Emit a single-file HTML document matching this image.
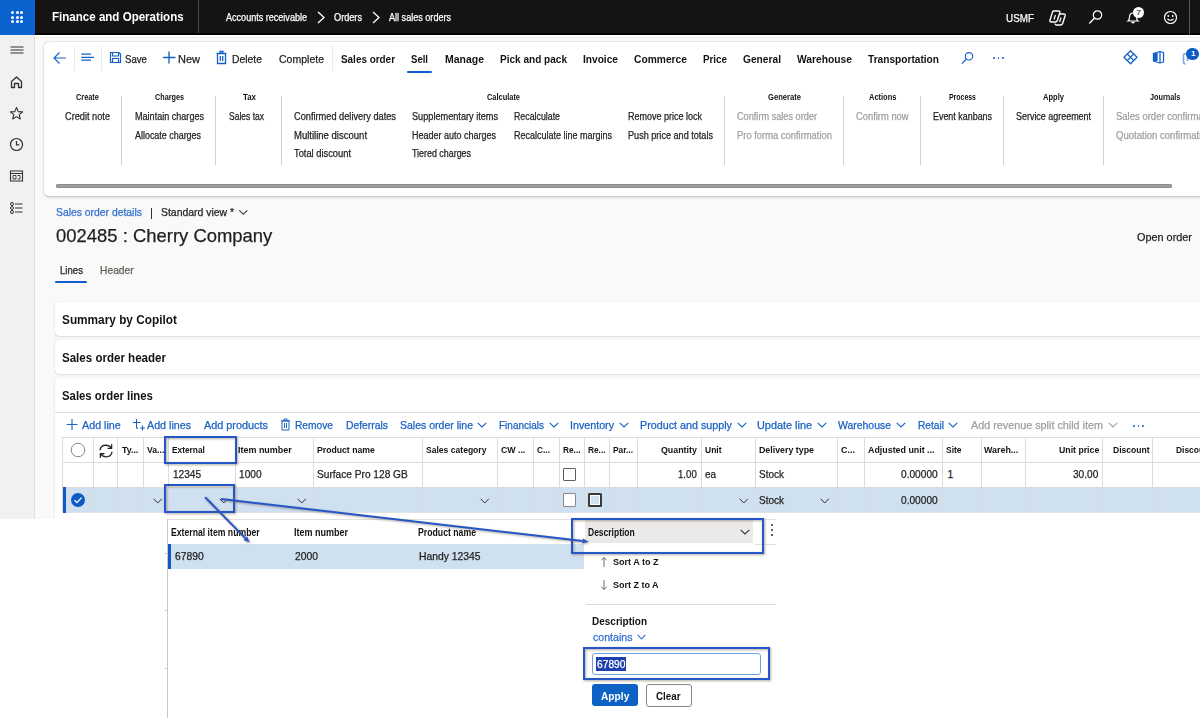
<!DOCTYPE html><html><head><meta charset="utf-8"><style>
html,body{margin:0;padding:0;width:1200px;height:718px;overflow:hidden;background:#fff}
body{position:relative;font-family:"Liberation Sans",sans-serif}
.t{position:absolute;white-space:nowrap;transform-origin:0 50%;}
.t.r{-webkit-text-stroke:0.25px currentColor}
svg{overflow:visible}
</style></head><body>
<div style="position:absolute;left:0px;top:0px;width:1200px;height:718px;background:#fff"></div>
<div style="position:absolute;left:0px;top:35px;width:35px;height:485px;background:#f2f1f0"></div>
<div style="position:absolute;left:35px;top:35px;width:1165px;height:485px;background:#faf9f8"></div>
<div style="position:absolute;left:34px;top:35px;width:1px;height:485px;background:#e1dfdd"></div>
<div style="position:absolute;left:35px;top:35px;width:1165px;height:2px;background:#fff"></div>
<div style="position:absolute;left:35px;top:37px;width:1165px;height:1px;background:#efeeed"></div>
<div style="position:absolute;left:0px;top:0px;width:1200px;height:35px;background:#151412"></div>
<div style="position:absolute;left:0px;top:33px;width:1200px;height:2px;background:#050505"></div>
<div style="position:absolute;left:0px;top:0px;width:35px;height:35px;background:#0b63cf"></div>
<div style="position:absolute;left:11.0px;top:11.0px;width:3px;height:3px;background:#fff;border-radius:50%"></div>
<div style="position:absolute;left:11.0px;top:15.5px;width:3px;height:3px;background:#fff;border-radius:50%"></div>
<div style="position:absolute;left:11.0px;top:20.0px;width:3px;height:3px;background:#fff;border-radius:50%"></div>
<div style="position:absolute;left:15.5px;top:11.0px;width:3px;height:3px;background:#fff;border-radius:50%"></div>
<div style="position:absolute;left:15.5px;top:15.5px;width:3px;height:3px;background:#fff;border-radius:50%"></div>
<div style="position:absolute;left:15.5px;top:20.0px;width:3px;height:3px;background:#fff;border-radius:50%"></div>
<div style="position:absolute;left:20.0px;top:11.0px;width:3px;height:3px;background:#fff;border-radius:50%"></div>
<div style="position:absolute;left:20.0px;top:15.5px;width:3px;height:3px;background:#fff;border-radius:50%"></div>
<div style="position:absolute;left:20.0px;top:20.0px;width:3px;height:3px;background:#fff;border-radius:50%"></div>
<div class="t b" style="left:51.70px;top:10.45px;font-size:13px;line-height:13px;font-weight:700;color:#fff;transform:scaleX(0.889);">Finance and Operations</div>
<div style="position:absolute;left:198px;top:0px;width:1px;height:33px;background:#4a4846"></div>
<div class="t r" style="left:226.00px;top:11.65px;font-size:11px;line-height:11px;font-weight:400;color:#fff;transform:scaleX(0.823);">Accounts receivable</div>
<div class="t r" style="left:334.00px;top:11.65px;font-size:11px;line-height:11px;font-weight:400;color:#fff;transform:scaleX(0.833);">Orders</div>
<div class="t r" style="left:389.00px;top:11.65px;font-size:11px;line-height:11px;font-weight:400;color:#fff;transform:scaleX(0.825);">All sales orders</div>
<svg style="position:absolute;left:316px;top:11px" width="10" height="13"><path d="M2 1 L8 6.5 L2 12" stroke="#fff" stroke-width="1.3" fill="none"/></svg>
<svg style="position:absolute;left:371px;top:11px" width="10" height="13"><path d="M2 1 L8 6.5 L2 12" stroke="#fff" stroke-width="1.3" fill="none"/></svg>
<div class="t r" style="left:1006.00px;top:12.65px;font-size:11px;line-height:11px;font-weight:400;color:#fff;transform:scaleX(0.899);">USMF</div>
<div style="position:absolute;left:1189px;top:0px;width:1px;height:35px;background:#555"></div>
<div style="position:absolute;left:43.5px;top:42px;width:1170px;height:153.5px;background:#fff;border-radius:5px;box-shadow:0 0 1.5px rgba(0,0,0,.28),0 1.5px 2.5px rgba(0,0,0,.12)"></div>
<svg style="position:absolute;left:52px;top:50px;" width="16" height="16" viewBox="0 0 16 16"><path d="M2.5 8 H14 M7.5 2.5 L2 8 L7.5 13.5" stroke="#1460c8" stroke-width="1.15" fill="none"/></svg>
<div style="position:absolute;left:74px;top:46px;width:1px;height:25px;background:#edebe9"></div>
<svg style="position:absolute;left:80px;top:51px;" width="16" height="12" viewBox="0 0 16 12"><path d="M1.3 3 H11 M1.3 6.3 H14 M1.3 9.2 H11" stroke="#1460c8" stroke-width="1.25" fill="none"/></svg>
<div style="position:absolute;left:101px;top:46px;width:1px;height:25px;background:#edebe9"></div>
<svg style="position:absolute;left:109px;top:51px;" width="13" height="13" viewBox="0 0 13 13"><path d="M1.5 1.5 H10 L11.5 3 V11.5 H1.5 Z M3.5 1.5 V5 H9.5 V1.5 M3.5 11.5 V7.5 H9.5 V11.5" stroke="#1460c8" stroke-width="1.2" fill="none"/></svg>
<div class="t r" style="left:124.80px;top:53.65px;font-size:11px;line-height:11px;font-weight:400;color:#201f1e;transform:scaleX(0.874);">Save</div>
<svg style="position:absolute;left:162px;top:50px;" width="15" height="15" viewBox="0 0 15 15"><path d="M7 1.5 V13.5 M1 7.5 H13.5" stroke="#1460c8" stroke-width="1.35" fill="none"/></svg>
<div class="t r" style="left:178.00px;top:53.65px;font-size:11px;line-height:11px;font-weight:400;color:#201f1e;transform:scaleX(0.999);">New</div>
<svg style="position:absolute;left:215px;top:50px;" width="13" height="15" viewBox="0 0 13 15"><path d="M2.5 3.5 H10.5 V13.5 H2.5 Z M1.5 3.3 H11.5 M5 3 V1.5 H8 V3 M5.3 6 V11 M7.7 6 V11" stroke="#1460c8" stroke-width="1.3" fill="none"/></svg>
<div class="t r" style="left:232.00px;top:53.65px;font-size:11px;line-height:11px;font-weight:400;color:#201f1e;transform:scaleX(0.943);">Delete</div>
<div class="t r" style="left:279.00px;top:53.65px;font-size:11px;line-height:11px;font-weight:400;color:#201f1e;transform:scaleX(0.956);">Complete</div>
<div style="position:absolute;left:332px;top:46px;width:1px;height:25px;background:#edebe9"></div>
<div class="t b" style="left:341.00px;top:53.65px;font-size:11px;line-height:11px;font-weight:700;color:#141312;transform:scaleX(0.901);">Sales order</div>
<div class="t b" style="left:411.00px;top:53.65px;font-size:11px;line-height:11px;font-weight:700;color:#141312;transform:scaleX(0.869);">Sell</div>
<div class="t b" style="left:445.00px;top:53.65px;font-size:11px;line-height:11px;font-weight:700;color:#141312;transform:scaleX(0.952);">Manage</div>
<div class="t b" style="left:500.00px;top:53.65px;font-size:11px;line-height:11px;font-weight:700;color:#141312;transform:scaleX(0.913);">Pick and pack</div>
<div class="t b" style="left:583.00px;top:53.65px;font-size:11px;line-height:11px;font-weight:700;color:#141312;transform:scaleX(0.923);">Invoice</div>
<div class="t b" style="left:634.00px;top:53.65px;font-size:11px;line-height:11px;font-weight:700;color:#141312;transform:scaleX(0.932);">Commerce</div>
<div class="t b" style="left:703.00px;top:53.65px;font-size:11px;line-height:11px;font-weight:700;color:#141312;transform:scaleX(0.892);">Price</div>
<div class="t b" style="left:743.00px;top:53.65px;font-size:11px;line-height:11px;font-weight:700;color:#141312;transform:scaleX(0.928);">General</div>
<div class="t b" style="left:797.00px;top:53.65px;font-size:11px;line-height:11px;font-weight:700;color:#141312;transform:scaleX(0.934);">Warehouse</div>
<div class="t b" style="left:868.00px;top:53.65px;font-size:11px;line-height:11px;font-weight:700;color:#141312;transform:scaleX(0.922);">Transportation</div>
<div style="position:absolute;left:407px;top:70.5px;width:25px;height:2.5px;background:#0f5fcc;border-radius:1px"></div>
<svg style="position:absolute;left:959px;top:50px;" width="16" height="16" viewBox="0 0 16 16"><circle cx="10" cy="6.3" r="3.7" stroke="#1460c8" stroke-width="1.1" fill="none"/><path d="M7.4 9 L3 13.6" stroke="#1460c8" stroke-width="1.2"/></svg>
<div style="position:absolute;left:993.0px;top:57px;width:1.8px;height:1.8px;background:#1460c8;border-radius:50%"></div>
<div style="position:absolute;left:997.5px;top:57px;width:1.8px;height:1.8px;background:#1460c8;border-radius:50%"></div>
<div style="position:absolute;left:1002.0px;top:57px;width:1.8px;height:1.8px;background:#1460c8;border-radius:50%"></div>
<svg style="position:absolute;left:1122px;top:49px;" width="17" height="17" viewBox="0 0 17 17"><path d="M8.5 1.8 L15 8.3 L8.5 14.8 L2 8.3 Z" stroke="#1460c8" stroke-width="1.3" fill="none" stroke-linejoin="round"/><path d="M5.3 5 L11.7 11.5 M11.7 5 L5.3 11.5" stroke="#1460c8" stroke-width="1.1" fill="none"/></svg>
<svg style="position:absolute;left:1152px;top:50px;" width="13" height="14" viewBox="0 0 13 14"><path d="M1.5 3.5 L8 1.5 L11.5 2.5 V12 L8 13 L1.5 11 Z" stroke="#1460c8" stroke-width="1.3" fill="none" stroke-linejoin="round"/><path d="M2 4 L5 3.2 V10.2 L2 11 Z M8 1.8 V12.8" stroke="#1460c8" stroke-width="1.3" fill="#1460c8"/></svg>
<svg style="position:absolute;left:1181px;top:51px;" width="12" height="15" viewBox="0 0 12 15"><path d="M4.5 13 Q2.5 13 2.5 10.5 V4.5 Q2.5 2.5 4.5 2.5 Q6.5 2.5 6.5 4.5 V10" stroke="#7fa6e0" stroke-width="1.6" fill="none"/></svg>
<div style="position:absolute;left:1186px;top:47.5px;width:12.5px;height:12.5px;background:#0f5bc4;border-radius:50%"></div>
<div class="t b" style="left:1191.00px;top:50.20px;font-size:8px;line-height:8px;font-weight:700;color:#fff;transform:scaleX(1.000);">1</div>
<div class="t b" style="left:75.80px;top:92.62px;font-size:8.8px;line-height:8.8px;font-weight:700;color:#141312;transform:scaleX(0.832);">Create</div>
<div class="t b" style="left:155.00px;top:92.62px;font-size:8.8px;line-height:8.8px;font-weight:700;color:#141312;transform:scaleX(0.824);">Charges</div>
<div class="t b" style="left:243.00px;top:92.62px;font-size:8.8px;line-height:8.8px;font-weight:700;color:#141312;transform:scaleX(0.896);">Tax</div>
<div class="t b" style="left:487.00px;top:92.62px;font-size:8.8px;line-height:8.8px;font-weight:700;color:#141312;transform:scaleX(0.843);">Calculate</div>
<div class="t b" style="left:768.00px;top:92.62px;font-size:8.8px;line-height:8.8px;font-weight:700;color:#141312;transform:scaleX(0.865);">Generate</div>
<div class="t b" style="left:869.00px;top:92.62px;font-size:8.8px;line-height:8.8px;font-weight:700;color:#141312;transform:scaleX(0.849);">Actions</div>
<div class="t b" style="left:949.00px;top:92.62px;font-size:8.8px;line-height:8.8px;font-weight:700;color:#141312;transform:scaleX(0.788);">Process</div>
<div class="t b" style="left:1043.00px;top:92.62px;font-size:8.8px;line-height:8.8px;font-weight:700;color:#141312;transform:scaleX(0.859);">Apply</div>
<div class="t b" style="left:1150.40px;top:92.62px;font-size:8.8px;line-height:8.8px;font-weight:700;color:#141312;transform:scaleX(0.829);">Journals</div>
<div style="position:absolute;left:121px;top:96px;width:1px;height:69px;background:#d2d0ce"></div>
<div style="position:absolute;left:215px;top:96px;width:1px;height:69px;background:#d2d0ce"></div>
<div style="position:absolute;left:281px;top:96px;width:1px;height:69px;background:#d2d0ce"></div>
<div style="position:absolute;left:724px;top:96px;width:1px;height:69px;background:#d2d0ce"></div>
<div style="position:absolute;left:843px;top:96px;width:1px;height:69px;background:#d2d0ce"></div>
<div style="position:absolute;left:920px;top:96px;width:1px;height:69px;background:#d2d0ce"></div>
<div style="position:absolute;left:1003px;top:96px;width:1px;height:69px;background:#d2d0ce"></div>
<div style="position:absolute;left:1103px;top:96px;width:1px;height:69px;background:#d2d0ce"></div>
<div class="t r" style="left:64.80px;top:112.20px;font-size:10px;line-height:10px;font-weight:400;color:#252423;transform:scaleX(0.920);">Credit note</div>
<div class="t r" style="left:135.00px;top:112.20px;font-size:10px;line-height:10px;font-weight:400;color:#252423;transform:scaleX(0.906);">Maintain charges</div>
<div class="t r" style="left:135.00px;top:130.50px;font-size:10px;line-height:10px;font-weight:400;color:#252423;transform:scaleX(0.893);">Allocate charges</div>
<div class="t r" style="left:229.00px;top:112.20px;font-size:10px;line-height:10px;font-weight:400;color:#252423;transform:scaleX(0.851);">Sales tax</div>
<div class="t r" style="left:294.00px;top:112.20px;font-size:10px;line-height:10px;font-weight:400;color:#252423;transform:scaleX(0.922);">Confirmed delivery dates</div>
<div class="t r" style="left:294.00px;top:130.50px;font-size:10px;line-height:10px;font-weight:400;color:#252423;transform:scaleX(0.952);">Multiline discount</div>
<div class="t r" style="left:294.00px;top:149.30px;font-size:10px;line-height:10px;font-weight:400;color:#252423;transform:scaleX(0.932);">Total discount</div>
<div class="t r" style="left:412.00px;top:112.20px;font-size:10px;line-height:10px;font-weight:400;color:#252423;transform:scaleX(0.916);">Supplementary items</div>
<div class="t r" style="left:412.00px;top:130.50px;font-size:10px;line-height:10px;font-weight:400;color:#252423;transform:scaleX(0.899);">Header auto charges</div>
<div class="t r" style="left:412.00px;top:149.30px;font-size:10px;line-height:10px;font-weight:400;color:#252423;transform:scaleX(0.889);">Tiered charges</div>
<div class="t r" style="left:514.00px;top:112.20px;font-size:10px;line-height:10px;font-weight:400;color:#252423;transform:scaleX(0.880);">Recalculate</div>
<div class="t r" style="left:514.00px;top:130.50px;font-size:10px;line-height:10px;font-weight:400;color:#252423;transform:scaleX(0.900);">Recalculate line margins</div>
<div class="t r" style="left:628.00px;top:112.20px;font-size:10px;line-height:10px;font-weight:400;color:#252423;transform:scaleX(0.899);">Remove price lock</div>
<div class="t r" style="left:628.00px;top:130.50px;font-size:10px;line-height:10px;font-weight:400;color:#252423;transform:scaleX(0.910);">Push price and totals</div>
<div class="t r" style="left:933.00px;top:112.20px;font-size:10px;line-height:10px;font-weight:400;color:#252423;transform:scaleX(0.892);">Event kanbans</div>
<div class="t r" style="left:1016.00px;top:112.20px;font-size:10px;line-height:10px;font-weight:400;color:#252423;transform:scaleX(0.894);">Service agreement</div>
<div class="t r" style="left:737.00px;top:112.20px;font-size:10px;line-height:10px;font-weight:400;color:#a19f9d;transform:scaleX(0.917);">Confirm sales order</div>
<div class="t r" style="left:737.00px;top:130.50px;font-size:10px;line-height:10px;font-weight:400;color:#a19f9d;transform:scaleX(0.939);">Pro forma confirmation</div>
<div class="t r" style="left:856.40px;top:112.20px;font-size:10px;line-height:10px;font-weight:400;color:#a19f9d;transform:scaleX(0.937);">Confirm now</div>
<div class="t r" style="left:1116.00px;top:112.20px;font-size:10px;line-height:10px;font-weight:400;color:#a19f9d;transform:scaleX(0.950);">Sales order confirmation</div>
<div class="t r" style="left:1116.00px;top:130.50px;font-size:10px;line-height:10px;font-weight:400;color:#a19f9d;transform:scaleX(0.954);">Quotation confirmation</div>
<div style="position:absolute;left:56px;top:183.75px;width:1115.5px;height:4px;background:#9f9e9d;border-radius:2px;box-shadow:inset 0 0 0 0.6px #7d7c7b"></div>
<svg style="position:absolute;left:9px;top:45px;" width="16" height="10" viewBox="0 0 16 10"><path d="M1.5 2 H14.5 M1.5 5 H14.5 M1.5 8 H14.5" stroke="#323130" stroke-width="1.1" fill="none"/></svg>
<svg style="position:absolute;left:9px;top:75px;" width="15" height="14" viewBox="0 0 15 14"><path d="M2.5 6.5 L7.5 2 L12.5 6.5 V12.5 H9.5 V8.5 H5.5 V12.5 H2.5 Z" stroke="#323130" stroke-width="1.3" fill="none" stroke-linejoin="round"/></svg>
<svg style="position:absolute;left:9px;top:106px;" width="15" height="15" viewBox="0 0 15 15"><path d="M7.5 1.5 L9.2 5.6 L13.6 5.9 L10.2 8.7 L11.3 13 L7.5 10.6 L3.7 13 L4.8 8.7 L1.4 5.9 L5.8 5.6 Z" stroke="#323130" stroke-width="1.1" fill="none" stroke-linejoin="round"/></svg>
<svg style="position:absolute;left:9px;top:137px;" width="15" height="15" viewBox="0 0 15 15"><circle cx="7.5" cy="7.5" r="6" stroke="#323130" stroke-width="1.2" fill="none"/><path d="M7.5 4 V7.8 H10.3" stroke="#323130" stroke-width="1.2" fill="none"/></svg>
<svg style="position:absolute;left:9px;top:169px;" width="15" height="14" viewBox="0 0 15 14"><path d="M1.5 2 H13.5 V12 H1.5 Z M1.5 4.5 H13.5" stroke="#323130" stroke-width="1.1" fill="none"/><path d="M4 6.5 H7 V10 H4 Z M8.5 6.5 H11 V10 H8.5" stroke="#323130" stroke-width="0.9" fill="none"/></svg>
<svg style="position:absolute;left:9px;top:201px;" width="15" height="14" viewBox="0 0 15 14"><circle cx="3" cy="3" r="1.5" stroke="#323130" stroke-width="1" fill="none"/><circle cx="3" cy="7" r="1.5" stroke="#323130" stroke-width="1" fill="none"/><circle cx="3" cy="11" r="1.5" stroke="#323130" stroke-width="1" fill="none"/><path d="M6 3 H13.5 M6 7 H13.5 M6 11 H13.5" stroke="#323130" stroke-width="1.1"/></svg>
<svg style="position:absolute;left:1048px;top:9px;" width="20" height="17" viewBox="0 0 20 17"><path d="M5.5 2 H10.5 Q12.3 2 11.8 3.8 L9.4 11.3 Q8.9 13 7 13 H3.3 Q1.5 13 2 11.2 L4.3 3.6 Q4.7 2 5.5 2 Z" stroke="#fff" stroke-width="1.4" fill="none"/><path d="M11.2 5 H15.8 Q17.6 5 17.1 6.8 L14.7 14.3 Q14.2 16 12.3 16 H8.6 Q7 16 7.3 14.5" stroke="#fff" stroke-width="1.4" fill="none"/><path d="M7.5 6 L6 10.5 M13 8.5 L11.6 13" stroke="#fff" stroke-width="1.2"/></svg>
<svg style="position:absolute;left:1087px;top:9px;" width="16" height="16" viewBox="0 0 16 16"><circle cx="10.5" cy="6" r="4.2" stroke="#fff" stroke-width="1.2" fill="none"/><path d="M7.5 9 L2.3 14.5" stroke="#fff" stroke-width="1.3"/></svg>
<svg style="position:absolute;left:1126px;top:10px;" width="14" height="14" viewBox="0 0 14 14"><path d="M2 11 Q3.5 10 3.5 7 Q3.5 3 7 3 Q10.5 3 10.5 7 Q10.5 10 12 11 Z M5.5 12 Q7 13.5 8.5 12" stroke="#fff" stroke-width="1.2" fill="none"/></svg>
<div style="position:absolute;left:1133px;top:6.8px;width:11px;height:11px;background:#fff;border-radius:50%"></div>
<div class="t b" style="left:1136.50px;top:9.20px;font-size:8px;line-height:8px;font-weight:700;color:#555;transform:scaleX(1.000);">7</div>
<svg style="position:absolute;left:1163px;top:10px;" width="15" height="15" viewBox="0 0 15 15"><circle cx="7.5" cy="7.5" r="6" stroke="#fff" stroke-width="1.2" fill="none"/><circle cx="5.3" cy="6" r="0.9" fill="#fff"/><circle cx="9.7" cy="6" r="0.9" fill="#fff"/><path d="M4.5 9 Q7.5 11.5 10.5 9" stroke="#fff" stroke-width="1.1" fill="none"/></svg>
<div class="t r" style="left:55.60px;top:206.65px;font-size:11px;line-height:11px;font-weight:400;color:#2f6fd0;transform:scaleX(0.943);">Sales order details</div>
<div style="position:absolute;left:151px;top:208px;width:1px;height:10.5px;background:#323130"></div>
<div class="t r" style="left:161.00px;top:206.65px;font-size:11px;line-height:11px;font-weight:400;color:#252423;transform:scaleX(0.948);">Standard view *</div>
<svg style="position:absolute;left:237.5px;top:208.5px;" width="12" height="8" viewBox="0 0 12 8"><path d="M1.3 1.3 L5.3 5.3 L9.3 1.3" stroke="#323130" stroke-width="1.1" fill="none"/></svg>
<div class="t r" style="left:55.60px;top:226.88px;font-size:18.5px;line-height:18.5px;font-weight:400;color:#201f1e;transform:scaleX(0.997);">002485 : Cherry Company</div>
<div class="t r" style="left:1136.70px;top:232.05px;font-size:11px;line-height:11px;font-weight:400;color:#201f1e;transform:scaleX(0.988);">Open order</div>
<div class="t r" style="left:59.80px;top:264.97px;font-size:10.5px;line-height:10.5px;font-weight:400;color:#252423;transform:scaleX(0.916);">Lines</div>
<div class="t r" style="left:100.00px;top:264.97px;font-size:10.5px;line-height:10.5px;font-weight:400;color:#605e5c;transform:scaleX(0.979);">Header</div>
<div style="position:absolute;left:55.3px;top:280.8px;width:32px;height:2px;background:#0f5fcc;border-radius:1px"></div>
<div style="position:absolute;left:54.7px;top:302px;width:1160px;height:33.5px;background:#fff;border-radius:4px;box-shadow:0 0 1px rgba(0,0,0,.22),0 1px 2px rgba(0,0,0,.10)"></div>
<div style="position:absolute;left:54.7px;top:340px;width:1160px;height:33.5px;background:#fff;border-radius:4px;box-shadow:0 0 1px rgba(0,0,0,.22),0 1px 2px rgba(0,0,0,.10)"></div>
<div style="position:absolute;left:54.7px;top:378px;width:1160px;height:160px;background:#fff;border-radius:4px;box-shadow:0 0 1px rgba(0,0,0,.22),0 1px 2px rgba(0,0,0,.10)"></div>
<div class="t b" style="left:62.00px;top:313.75px;font-size:12.3px;line-height:12.3px;font-weight:700;color:#141312;transform:scaleX(0.961);">Summary by Copilot</div>
<div class="t b" style="left:62.00px;top:351.65px;font-size:12.3px;line-height:12.3px;font-weight:700;color:#141312;transform:scaleX(0.939);">Sales order header</div>
<div class="t b" style="left:62.00px;top:389.75px;font-size:12.3px;line-height:12.3px;font-weight:700;color:#141312;transform:scaleX(0.924);">Sales order lines</div>
<div style="position:absolute;left:54.7px;top:412.3px;width:1146px;height:1px;background:#e1dfdd"></div>
<svg style="position:absolute;left:66px;top:418px;" width="13" height="13" viewBox="0 0 13 13"><path d="M6 1 V12 M0.8 6.5 H11.5" stroke="#1a62c4" stroke-width="1.1" fill="none"/></svg>
<div class="t r" style="left:82.00px;top:419.77px;font-size:10.5px;line-height:10.5px;font-weight:400;color:#1a62c4;transform:scaleX(1.022);">Add line</div>
<svg style="position:absolute;left:132px;top:418px;" width="13" height="14" viewBox="0 0 13 14"><path d="M4.5 1 V9.5 M0.8 4.5 H8.5 M10.5 7.5 V12.5 M8 10 H13 M4.5 9.5 Q4.5 10.5 6 10.5" stroke="#1a62c4" stroke-width="1.1" fill="none"/></svg>
<div class="t r" style="left:147.00px;top:419.77px;font-size:10.5px;line-height:10.5px;font-weight:400;color:#1a62c4;transform:scaleX(1.019);">Add lines</div>
<div class="t r" style="left:204.00px;top:419.77px;font-size:10.5px;line-height:10.5px;font-weight:400;color:#1a62c4;transform:scaleX(1.034);">Add products</div>
<svg style="position:absolute;left:280px;top:418px;" width="11" height="13" viewBox="0 0 11 13"><path d="M2 3 H9 V12 H2 Z M1 2.8 H10 M4 2.5 V1 H7 V2.5 M4.5 5 V10 M6.5 5 V10" stroke="#1a62c4" stroke-width="1" fill="none"/></svg>
<div class="t r" style="left:295.00px;top:419.77px;font-size:10.5px;line-height:10.5px;font-weight:400;color:#1a62c4;transform:scaleX(0.972);">Remove</div>
<div class="t r" style="left:346.00px;top:419.77px;font-size:10.5px;line-height:10.5px;font-weight:400;color:#1a62c4;transform:scaleX(0.986);">Deferrals</div>
<div class="t r" style="left:400.00px;top:419.77px;font-size:10.5px;line-height:10.5px;font-weight:400;color:#1a62c4;transform:scaleX(1.001);">Sales order line</div>
<svg style="position:absolute;left:477px;top:422px;" width="10" height="6" viewBox="0 0 10 6"><path d="M0.7 0.8 L5.0 5 L9.3 0.8" stroke="#1a62c4" stroke-width="1.1" fill="none"/></svg>
<div class="t r" style="left:499.00px;top:419.77px;font-size:10.5px;line-height:10.5px;font-weight:400;color:#1a62c4;transform:scaleX(0.952);">Financials</div>
<svg style="position:absolute;left:549px;top:422px;" width="10" height="6" viewBox="0 0 10 6"><path d="M0.7 0.8 L5.0 5 L9.3 0.8" stroke="#1a62c4" stroke-width="1.1" fill="none"/></svg>
<div class="t r" style="left:570.00px;top:419.77px;font-size:10.5px;line-height:10.5px;font-weight:400;color:#1a62c4;transform:scaleX(1.019);">Inventory</div>
<svg style="position:absolute;left:619px;top:422px;" width="10" height="6" viewBox="0 0 10 6"><path d="M0.7 0.8 L5.0 5 L9.3 0.8" stroke="#1a62c4" stroke-width="1.1" fill="none"/></svg>
<div class="t r" style="left:640.00px;top:419.77px;font-size:10.5px;line-height:10.5px;font-weight:400;color:#1a62c4;transform:scaleX(1.023);">Product and supply</div>
<svg style="position:absolute;left:737px;top:422px;" width="10" height="6" viewBox="0 0 10 6"><path d="M0.7 0.8 L5.0 5 L9.3 0.8" stroke="#1a62c4" stroke-width="1.1" fill="none"/></svg>
<div class="t r" style="left:757.00px;top:419.77px;font-size:10.5px;line-height:10.5px;font-weight:400;color:#1a62c4;transform:scaleX(1.035);">Update line</div>
<svg style="position:absolute;left:817px;top:422px;" width="10" height="6" viewBox="0 0 10 6"><path d="M0.7 0.8 L5.0 5 L9.3 0.8" stroke="#1a62c4" stroke-width="1.1" fill="none"/></svg>
<div class="t r" style="left:838.00px;top:419.77px;font-size:10.5px;line-height:10.5px;font-weight:400;color:#1a62c4;transform:scaleX(0.994);">Warehouse</div>
<svg style="position:absolute;left:896px;top:422px;" width="10" height="6" viewBox="0 0 10 6"><path d="M0.7 0.8 L5.0 5 L9.3 0.8" stroke="#1a62c4" stroke-width="1.1" fill="none"/></svg>
<div class="t r" style="left:918.00px;top:419.77px;font-size:10.5px;line-height:10.5px;font-weight:400;color:#1a62c4;transform:scaleX(0.968);">Retail</div>
<svg style="position:absolute;left:948px;top:422px;" width="10" height="6" viewBox="0 0 10 6"><path d="M0.7 0.8 L5.0 5 L9.3 0.8" stroke="#1a62c4" stroke-width="1.1" fill="none"/></svg>
<div class="t r" style="left:971.00px;top:419.77px;font-size:10.5px;line-height:10.5px;font-weight:400;color:#a19f9d;transform:scaleX(1.028);">Add revenue split child item</div>
<svg style="position:absolute;left:1108px;top:422px;" width="10" height="6" viewBox="0 0 10 6"><path d="M0.7 0.8 L5.0 5 L9.3 0.8" stroke="#a19f9d" stroke-width="1.1" fill="none"/></svg>
<div style="position:absolute;left:1133.0px;top:425px;width:1.8px;height:1.8px;background:#1a62c4;border-radius:50%"></div>
<div style="position:absolute;left:1137.5px;top:425px;width:1.8px;height:1.8px;background:#1a62c4;border-radius:50%"></div>
<div style="position:absolute;left:1142.0px;top:425px;width:1.8px;height:1.8px;background:#1a62c4;border-radius:50%"></div>
<div style="position:absolute;left:63px;top:487px;width:1137px;height:25.5px;background:#cfe0f1"></div>
<div style="position:absolute;left:63px;top:437px;width:1137px;height:1px;background:#dedcda"></div>
<div style="position:absolute;left:63px;top:462.3px;width:1137px;height:1px;background:#dedcda"></div>
<div style="position:absolute;left:63px;top:486.8px;width:1137px;height:1px;background:#dedcda"></div>
<div style="position:absolute;left:63px;top:512px;width:1137px;height:1px;background:#dfe3e8"></div>
<div style="position:absolute;left:62px;top:437px;width:1px;height:75px;background:#dedcda"></div>
<div style="position:absolute;left:93px;top:437px;width:1px;height:75px;background:#dedcda"></div>
<div style="position:absolute;left:117px;top:437px;width:1px;height:75px;background:#dedcda"></div>
<div style="position:absolute;left:143px;top:437px;width:1px;height:75px;background:#dedcda"></div>
<div style="position:absolute;left:168px;top:437px;width:1px;height:75px;background:#dedcda"></div>
<div style="position:absolute;left:235px;top:437px;width:1px;height:75px;background:#dedcda"></div>
<div style="position:absolute;left:313px;top:437px;width:1px;height:75px;background:#dedcda"></div>
<div style="position:absolute;left:422px;top:437px;width:1px;height:75px;background:#dedcda"></div>
<div style="position:absolute;left:497px;top:437px;width:1px;height:75px;background:#dedcda"></div>
<div style="position:absolute;left:533px;top:437px;width:1px;height:75px;background:#dedcda"></div>
<div style="position:absolute;left:559px;top:437px;width:1px;height:75px;background:#dedcda"></div>
<div style="position:absolute;left:584px;top:437px;width:1px;height:75px;background:#dedcda"></div>
<div style="position:absolute;left:609px;top:437px;width:1px;height:75px;background:#dedcda"></div>
<div style="position:absolute;left:637px;top:437px;width:1px;height:75px;background:#dedcda"></div>
<div style="position:absolute;left:701px;top:437px;width:1px;height:75px;background:#dedcda"></div>
<div style="position:absolute;left:755px;top:437px;width:1px;height:75px;background:#dedcda"></div>
<div style="position:absolute;left:837px;top:437px;width:1px;height:75px;background:#dedcda"></div>
<div style="position:absolute;left:864px;top:437px;width:1px;height:75px;background:#dedcda"></div>
<div style="position:absolute;left:942px;top:437px;width:1px;height:75px;background:#dedcda"></div>
<div style="position:absolute;left:981px;top:437px;width:1px;height:75px;background:#dedcda"></div>
<div style="position:absolute;left:1025px;top:437px;width:1px;height:75px;background:#dedcda"></div>
<div style="position:absolute;left:1102px;top:437px;width:1px;height:75px;background:#dedcda"></div>
<div style="position:absolute;left:1152px;top:437px;width:1px;height:75px;background:#dedcda"></div>
<div style="position:absolute;left:63px;top:487px;width:3px;height:25.5px;background:#0f5bc4"></div>
<svg style="position:absolute;left:70px;top:442px;" width="16" height="16" viewBox="0 0 16 16"><circle cx="8" cy="8" r="6.8" stroke="#8a8886" stroke-width="1" fill="#fff"/></svg>
<svg style="position:absolute;left:98px;top:443px;" width="16" height="16" viewBox="0 0 16 16"><path d="M2 7.3 Q2.5 2.2 8 2.2 Q11.3 2.2 13 4.8 M14 8.7 Q13.5 13.8 8 13.8 Q4.7 13.8 3 11.2" stroke="#252423" stroke-width="1.35" fill="none"/><path d="M13.6 1.2 V5.3 H9.6 M2.4 14.8 V10.7 H6.4" stroke="#252423" stroke-width="1.35" fill="none"/></svg>
<div class="t b" style="left:121.70px;top:445.27px;font-size:9.8px;line-height:9.8px;font-weight:700;color:#141312;transform:scaleX(0.898);">Ty...</div>
<div class="t b" style="left:146.70px;top:445.27px;font-size:9.8px;line-height:9.8px;font-weight:700;color:#141312;transform:scaleX(0.882);">Va...</div>
<div class="t b" style="left:172.20px;top:445.27px;font-size:9.8px;line-height:9.8px;font-weight:700;color:#141312;transform:scaleX(0.851);">External</div>
<div class="t b" style="left:238.00px;top:445.27px;font-size:9.8px;line-height:9.8px;font-weight:700;color:#141312;transform:scaleX(0.913);">Item number</div>
<div class="t b" style="left:317.20px;top:445.27px;font-size:9.8px;line-height:9.8px;font-weight:700;color:#141312;transform:scaleX(0.885);">Product name</div>
<div class="t b" style="left:425.50px;top:445.27px;font-size:9.8px;line-height:9.8px;font-weight:700;color:#141312;transform:scaleX(0.874);">Sales category</div>
<div class="t b" style="left:500.70px;top:445.27px;font-size:9.8px;line-height:9.8px;font-weight:700;color:#141312;transform:scaleX(0.893);">CW ...</div>
<div class="t b" style="left:537.00px;top:445.27px;font-size:9.8px;line-height:9.8px;font-weight:700;color:#141312;transform:scaleX(0.853);">C...</div>
<div class="t b" style="left:562.50px;top:445.27px;font-size:9.8px;line-height:9.8px;font-weight:700;color:#141312;transform:scaleX(0.846);">Re...</div>
<div class="t b" style="left:587.50px;top:445.27px;font-size:9.8px;line-height:9.8px;font-weight:700;color:#141312;transform:scaleX(0.846);">Re...</div>
<div class="t b" style="left:613.00px;top:445.27px;font-size:9.8px;line-height:9.8px;font-weight:700;color:#141312;transform:scaleX(0.854);">Par...</div>
<div class="t b" style="left:661.20px;top:445.27px;font-size:9.8px;line-height:9.8px;font-weight:700;color:#141312;transform:scaleX(0.901);">Quantity</div>
<div class="t b" style="left:704.50px;top:445.27px;font-size:9.8px;line-height:9.8px;font-weight:700;color:#141312;transform:scaleX(0.866);">Unit</div>
<div class="t b" style="left:758.70px;top:445.27px;font-size:9.8px;line-height:9.8px;font-weight:700;color:#141312;transform:scaleX(0.901);">Delivery type</div>
<div class="t b" style="left:840.50px;top:445.27px;font-size:9.8px;line-height:9.8px;font-weight:700;color:#141312;transform:scaleX(0.918);">C...</div>
<div class="t b" style="left:868.00px;top:445.27px;font-size:9.8px;line-height:9.8px;font-weight:700;color:#141312;transform:scaleX(0.905);">Adjusted unit ...</div>
<div class="t b" style="left:945.50px;top:445.27px;font-size:9.8px;line-height:9.8px;font-weight:700;color:#141312;transform:scaleX(0.862);">Site</div>
<div class="t b" style="left:984.00px;top:445.27px;font-size:9.8px;line-height:9.8px;font-weight:700;color:#141312;transform:scaleX(0.908);">Wareh...</div>
<div class="t b" style="left:1058.75px;top:445.27px;font-size:9.8px;line-height:9.8px;font-weight:700;color:#141312;transform:scaleX(0.891);">Unit price</div>
<div class="t b" style="left:1113.00px;top:445.27px;font-size:9.8px;line-height:9.8px;font-weight:700;color:#141312;transform:scaleX(0.873);">Discount</div>
<div class="t b" style="left:1176.00px;top:445.27px;font-size:9.8px;line-height:9.8px;font-weight:700;color:#141312;transform:scaleX(0.859);">Discount</div>
<div class="t r" style="left:173.10px;top:470.46px;font-size:10.4px;line-height:10.4px;font-weight:400;color:#252423;transform:scaleX(0.972);">12345</div>
<div class="t r" style="left:238.70px;top:470.46px;font-size:10.4px;line-height:10.4px;font-weight:400;color:#252423;transform:scaleX(0.977);">1000</div>
<div class="t r" style="left:317.20px;top:470.46px;font-size:10.4px;line-height:10.4px;font-weight:400;color:#252423;transform:scaleX(0.976);">Surface Pro 128 GB</div>
<div class="t r" style="left:677.50px;top:470.46px;font-size:10.4px;line-height:10.4px;font-weight:400;color:#252423;transform:scaleX(0.926);">1.00</div>
<div class="t r" style="left:704.50px;top:470.46px;font-size:10.4px;line-height:10.4px;font-weight:400;color:#252423;transform:scaleX(0.950);">ea</div>
<div class="t r" style="left:758.75px;top:470.46px;font-size:10.4px;line-height:10.4px;font-weight:400;color:#252423;transform:scaleX(0.960);">Stock</div>
<div class="t r" style="left:901.25px;top:470.46px;font-size:10.4px;line-height:10.4px;font-weight:400;color:#252423;transform:scaleX(0.977);">0.00000</div>
<div class="t r" style="left:947.50px;top:470.46px;font-size:10.4px;line-height:10.4px;font-weight:400;color:#252423;transform:scaleX(1.000);">1</div>
<div class="t r" style="left:1073.00px;top:470.46px;font-size:10.4px;line-height:10.4px;font-weight:400;color:#252423;transform:scaleX(0.972);">30.00</div>
<div style="position:absolute;left:563px;top:467.8px;width:13.3px;height:13.3px;box-sizing:border-box;border:1px solid #605e5c;background:#fff;border-radius:1px"></div>
<svg style="position:absolute;left:70px;top:492px;" width="16" height="16" viewBox="0 0 16 16"><circle cx="8" cy="8" r="7" fill="#0f5bc4"/><path d="M4.5 8.2 L7 10.6 L11.5 5.6" stroke="#fff" stroke-width="1.3" fill="none"/></svg>
<svg style="position:absolute;left:153px;top:498px;" width="9.5" height="6" viewBox="0 0 9.5 6"><path d="M0.7 0.8 L4.75 5 L8.8 0.8" stroke="#323130" stroke-width="1.0" fill="none"/></svg>
<svg style="position:absolute;left:219px;top:498px;" width="9.5" height="6" viewBox="0 0 9.5 6"><path d="M0.7 0.8 L4.75 5 L8.8 0.8" stroke="#323130" stroke-width="1.0" fill="none"/></svg>
<svg style="position:absolute;left:297px;top:498px;" width="9.5" height="6" viewBox="0 0 9.5 6"><path d="M0.7 0.8 L4.75 5 L8.8 0.8" stroke="#323130" stroke-width="1.0" fill="none"/></svg>
<svg style="position:absolute;left:480px;top:498px;" width="9.5" height="6" viewBox="0 0 9.5 6"><path d="M0.7 0.8 L4.75 5 L8.8 0.8" stroke="#323130" stroke-width="1.0" fill="none"/></svg>
<svg style="position:absolute;left:739px;top:498px;" width="9.5" height="6" viewBox="0 0 9.5 6"><path d="M0.7 0.8 L4.75 5 L8.8 0.8" stroke="#323130" stroke-width="1.0" fill="none"/></svg>
<svg style="position:absolute;left:820px;top:498px;" width="9.5" height="6" viewBox="0 0 9.5 6"><path d="M0.7 0.8 L4.75 5 L8.8 0.8" stroke="#323130" stroke-width="1.0" fill="none"/></svg>
<div style="position:absolute;left:563px;top:493px;width:13.3px;height:13.7px;box-sizing:border-box;border:1px solid #8a8886;background:#fff;border-radius:1px"></div>
<div style="position:absolute;left:588px;top:493px;width:13.6px;height:13.7px;box-sizing:border-box;border:2px solid #3b3a39;background:#cfe0f1;box-shadow:inset 0 0 0 1px #fff;border-radius:1.5px"></div>
<div class="t r" style="left:758.75px;top:495.76px;font-size:10.4px;line-height:10.4px;font-weight:400;color:#252423;transform:scaleX(0.960);">Stock</div>
<div class="t r" style="left:901.25px;top:495.76px;font-size:10.4px;line-height:10.4px;font-weight:400;color:#252423;transform:scaleX(0.977);">0.00000</div>
<div style="position:absolute;left:0px;top:519px;width:1200px;height:199px;background:#fff"></div>
<div style="position:absolute;left:168px;top:519px;width:608px;height:1px;background:#e1dfdd"></div>
<div style="position:absolute;left:167px;top:519px;width:1px;height:199px;background:#c8c6c4"></div>
<div style="position:absolute;left:165px;top:553px;width:3px;height:1px;background:#c8c6c4"></div>
<div style="position:absolute;left:165px;top:610px;width:3px;height:1px;background:#c8c6c4"></div>
<div style="position:absolute;left:165px;top:668px;width:3px;height:1px;background:#c8c6c4"></div>
<div class="t b" style="left:171.30px;top:528.30px;font-size:10px;line-height:10px;font-weight:700;color:#141312;transform:scaleX(0.867);">External item number</div>
<div class="t b" style="left:294.00px;top:528.30px;font-size:10px;line-height:10px;font-weight:700;color:#141312;transform:scaleX(0.900);">Item number</div>
<div class="t b" style="left:418.00px;top:528.30px;font-size:10px;line-height:10px;font-weight:700;color:#141312;transform:scaleX(0.870);">Product name</div>
<div style="position:absolute;left:168px;top:543.8px;width:416px;height:25px;background:#cfe0f1"></div>
<div style="position:absolute;left:168px;top:543.8px;width:3px;height:25px;background:#0f5bc4"></div>
<div class="t r" style="left:174.60px;top:550.78px;font-size:10.5px;line-height:10.5px;font-weight:400;color:#201f1e;transform:scaleX(0.986);">67890</div>
<div class="t r" style="left:295.00px;top:550.78px;font-size:10.5px;line-height:10.5px;font-weight:400;color:#201f1e;transform:scaleX(0.984);">2000</div>
<div class="t r" style="left:418.50px;top:550.78px;font-size:10.5px;line-height:10.5px;font-weight:400;color:#201f1e;transform:scaleX(0.985);">Handy 12345</div>
<div style="position:absolute;left:584.7px;top:520.3px;width:168px;height:22.5px;background:#ebeae9"></div>
<div class="t b" style="left:587.70px;top:527.50px;font-size:10px;line-height:10px;font-weight:700;color:#141312;transform:scaleX(0.849);">Description</div>
<svg style="position:absolute;left:740px;top:529px;" width="10" height="6" viewBox="0 0 10 6"><path d="M0.7 0.8 L5.0 5 L9.3 0.8" stroke="#323130" stroke-width="1.1" fill="none"/></svg>
<div style="position:absolute;left:771.2px;top:524px;width:1.8px;height:1.8px;background:#323130;border-radius:50%"></div>
<div style="position:absolute;left:771.2px;top:529px;width:1.8px;height:1.8px;background:#323130;border-radius:50%"></div>
<div style="position:absolute;left:771.2px;top:534px;width:1.8px;height:1.8px;background:#323130;border-radius:50%"></div>
<div style="position:absolute;left:755px;top:543.6px;width:21px;height:1px;background:#e1dfdd"></div>
<svg style="position:absolute;left:600px;top:556px;" width="8" height="12" viewBox="0 0 8 12"><path d="M4 11 V1.5 M1.3 4.2 L4 1.5 L6.7 4.2" stroke="#605e5c" stroke-width="0.9" fill="none"/></svg>
<div class="t b" style="left:612.50px;top:557.82px;font-size:8.8px;line-height:8.8px;font-weight:700;color:#141312;transform:scaleX(1.029);">Sort A to Z</div>
<svg style="position:absolute;left:600px;top:579px;" width="8" height="12" viewBox="0 0 8 12"><path d="M4 1 V10.5 M1.3 7.8 L4 10.5 L6.7 7.8" stroke="#605e5c" stroke-width="0.9" fill="none"/></svg>
<div class="t b" style="left:612.50px;top:581.12px;font-size:8.8px;line-height:8.8px;font-weight:700;color:#141312;transform:scaleX(1.021);">Sort Z to A</div>
<div style="position:absolute;left:586px;top:604px;width:190px;height:1px;background:#dcdad8"></div>
<div class="t b" style="left:592.00px;top:616.38px;font-size:10.5px;line-height:10.5px;font-weight:700;color:#141312;transform:scaleX(0.952);">Description</div>
<div class="t r" style="left:592.50px;top:631.88px;font-size:10.5px;line-height:10.5px;font-weight:400;color:#2f6fd0;transform:scaleX(1.010);">contains</div>
<svg style="position:absolute;left:637px;top:633.5px;" width="9" height="6" viewBox="0 0 9 6"><path d="M0.7 0.8 L4.5 5 L8.3 0.8" stroke="#2f6fd0" stroke-width="1.1" fill="none"/></svg>
<div style="position:absolute;left:592.4px;top:653.3px;width:168.3px;height:22px;box-sizing:border-box;border:1px solid #6ea0e0;border-radius:3px;background:#fff"></div>
<div style="position:absolute;left:596px;top:657px;width:29.5px;height:14px;background:#1e3fae"></div>
<div class="t r" style="left:596.50px;top:659.83px;font-size:10.2px;line-height:10.2px;font-weight:400;color:#fff;transform:scaleX(1.005);">67890</div>
<div style="position:absolute;left:592px;top:683.8px;width:46px;height:22.6px;background:#0f62c5;border-radius:3px"></div>
<div class="t b" style="left:600.70px;top:690.78px;font-size:10.5px;line-height:10.5px;font-weight:700;color:#fff;transform:scaleX(0.970);">Apply</div>
<div style="position:absolute;left:645.7px;top:683.5px;width:46px;height:23px;box-sizing:border-box;border:1px solid #8a8886;border-radius:3px;background:#fff"></div>
<div class="t b" style="left:656.30px;top:690.78px;font-size:10.5px;line-height:10.5px;font-weight:700;color:#141312;transform:scaleX(0.933);">Clear</div>
<div style="position:absolute;left:164.2px;top:436px;width:72.60000000000002px;height:28.399999999999977px;box-sizing:border-box;border:2px solid #2456c8;filter:drop-shadow(1.2px 1.6px 1px rgba(110,90,70,.55))"></div>
<div style="position:absolute;left:164.2px;top:484.1px;width:70.4px;height:28.699999999999932px;box-sizing:border-box;border:2px solid #2456c8;filter:drop-shadow(1.2px 1.6px 1px rgba(110,90,70,.55))"></div>
<div style="position:absolute;left:571px;top:517.6px;width:193px;height:36.19999999999993px;box-sizing:border-box;border:2px solid #2456c8;filter:drop-shadow(1.2px 1.6px 1px rgba(110,90,70,.55))"></div>
<div style="position:absolute;left:582.5px;top:647px;width:187.79999999999995px;height:33px;box-sizing:border-box;border:2px solid #2456c8;filter:drop-shadow(1.2px 1.6px 1px rgba(110,90,70,.55))"></div>
<svg style="position:absolute;left:0;top:0;filter:drop-shadow(1.2px 1.6px 1px rgba(110,90,70,.55))" width="1200" height="718"><path d="M205.1 497.3 L245.29 538.12" stroke="#2456c8" stroke-width="2"/><path d="M249.5 542.4 L243.49 539.89 L247.09 536.36 Z" fill="#2456c8"/></svg>
<svg style="position:absolute;left:0;top:0;filter:drop-shadow(1.2px 1.6px 1px rgba(110,90,70,.55))" width="1200" height="718"><path d="M221.2 499 L582.54 541.11" stroke="#2456c8" stroke-width="2"/><path d="M588.5 541.8 L582.25 543.61 L582.83 538.60 Z" fill="#2456c8"/></svg>
</body></html>
